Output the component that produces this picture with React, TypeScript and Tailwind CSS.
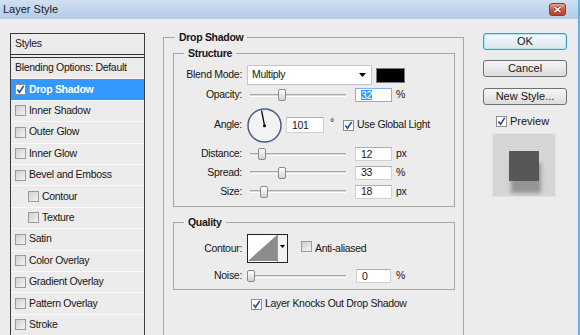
import React from "react";

function Check({ checked }: { checked?: boolean }) {
  return (
    <span
      className={
        checked
          ? "inline-flex w-[11px] h-[11px] shrink-0 items-center justify-center border border-[#8f8f8f] bg-white"
          : "inline-flex w-[11px] h-[11px] shrink-0 items-center justify-center border border-[#9a9a9a] bg-gradient-to-br from-[#cfcfcf] to-[#f4f4f4]"
      }
    >
      {checked && (
        <svg width="9" height="9" viewBox="0 0 9 9">
          <path d="M1.4 4.6 L3.5 7.3 L7.7 0.9" fill="none" stroke="#2b4c9e" strokeWidth="1.6" />
        </svg>
      )}
    </span>
  );
}

function Slider({ thumb }: { thumb: string }) {
  return (
    <div className="relative flex h-[12px] w-[96px] shrink-0 items-center">
      <div className="h-[3px] w-full border-t border-[#a8a8a8] border-b border-b-white bg-[#d9d9d9]" />
      <div className={"absolute top-0 h-[12px] w-[8px] rounded-[2px] border border-[#8a8a8a] bg-gradient-to-b from-white to-[#d4d4d4] " + thumb} />
    </div>
  );
}

function Field({ value, w, h, selected }: { value: string; w: string; h: string; selected?: boolean }) {
  return (
    <div
      className={
        (selected ? "border-[#7eb4ea] " : "border-[#d0d0d0] border-t-[#adadad] ") +
        "flex shrink-0 items-center border bg-white pl-[5px] text-[10.5px] leading-none " +
        w +
        " " +
        h
      }
    >
      {selected ? <span className="bg-[#3399ff] text-white">{value}</span> : value}
    </div>
  );
}

function Label({ children }: { children: React.ReactNode }) {
  return <span className="w-[68px] shrink-0 text-right">{children}</span>;
}

const items: { label: string; checked?: boolean; selected?: boolean; indent?: boolean; noCheck?: boolean }[] = [
  { label: "Blending Options: Default", noCheck: true },
  { label: "Drop Shadow", checked: true, selected: true },
  { label: "Inner Shadow" },
  { label: "Outer Glow" },
  { label: "Inner Glow" },
  { label: "Bevel and Emboss" },
  { label: "Contour", indent: true },
  { label: "Texture", indent: true },
  { label: "Satin" },
  { label: "Color Overlay" },
  { label: "Gradient Overlay" },
  { label: "Pattern Overlay" },
  { label: "Stroke" },
];

export default function App() {
  return (
    <div className="h-[335px] w-[580px] overflow-hidden border-r-2 border-[#5cb3e6] bg-[#ececec] font-['Liberation_Sans',Arial,sans-serif] text-[10.5px] tracking-[-0.3px] text-[#161616]">
      {/* title bar */}
      <div className="flex h-[19px] items-center justify-between bg-gradient-to-b from-[#cfe0f2] to-[#b3cbe6] pl-[3px] pr-[12px]">
        <span className="text-[11px] tracking-normal text-[#1b1b1b]">Layer Style</span>
        <div className="flex h-[13px] w-[17px] items-center justify-center rounded-[3px] border border-[#8a3a2d] bg-gradient-to-b from-[#e9a392] via-[#d2583f] to-[#c0402a]">
          <svg width="9" height="7" viewBox="0 0 9 7">
            <path d="M1.5 0.8 L7.5 6.2 M7.5 0.8 L1.5 6.2" stroke="#5a1f16" strokeWidth="2.6" />
            <path d="M1.5 0.8 L7.5 6.2 M7.5 0.8 L1.5 6.2" stroke="#ffffff" strokeWidth="1.6" />
          </svg>
        </div>
      </div>

      {/* body */}
      <div className="flex items-start pl-[10px]">
        {/* style list */}
        <div className="mt-[14px] h-[320px] w-[135px] shrink-0 border border-[#3a3a3a] bg-[#ececec]">
          <div className="flex h-[24px] items-center border-b-[4px] border-double border-[#333] pl-[4px]">Styles</div>
          {items.map((it) => (
            <div
              key={it.label}
              className={
                (it.selected ? "bg-[#3399ff] font-bold text-white " : "") +
                (it.indent ? "pl-[17px] " : "pl-[4px] ") +
                "flex h-[21.4px] items-center gap-[3px] border-b border-[#fafafa]"
              }
            >
              {!it.noCheck && <Check checked={it.checked} />}
              <span>{it.label}</span>
            </div>
          ))}
        </div>

        {/* drop shadow settings */}
        <fieldset className="ml-[18px] mt-[12px] h-[330px] w-[301px] shrink-0 border border-[#a6a6a6] pl-[9px] pr-[8px]">
          <legend className="ml-[2px] px-[4px] text-[10.5px] font-bold leading-[12px]">Drop Shadow</legend>

          <fieldset className="mt-[4px] border border-[#a6a6a6] pb-[5px] pt-[6px]">
            <legend className="ml-[10px] px-[4px] font-bold leading-[12px]">Structure</legend>

            <div className="flex h-[20px] items-center">
              <Label>Blend Mode:</Label>
              <div className="ml-[5px] flex h-[20px] w-[125px] items-center justify-between border border-[#c5c5c5] bg-white pl-[4px] pr-[5px]">
                <span>Multiply</span>
                <svg width="7" height="4" viewBox="0 0 7 4">
                  <path d="M0 0 H7 L3.5 4 Z" fill="#000" />
                </svg>
              </div>
              <div className="ml-[4px] h-[15px] w-[29px] border border-[#7a7a7a] bg-black" />
            </div>

            <div className="flex h-[20px] items-center">
              <Label>Opacity:</Label>
              <div className="ml-[8px]">
                <Slider thumb="left-[28px]" />
              </div>
              <div className="ml-[9px]">
                <Field value="32" w="w-[37px]" h="h-[14px]" selected />
              </div>
              <span className="ml-[4px]">%</span>
            </div>

            <div className="flex h-[40px] items-center">
              <Label>Angle:</Label>
              <svg className="ml-[5px] shrink-0" width="35" height="35" viewBox="0 0 35 35">
                <circle cx="17.5" cy="17.5" r="16.5" fill="#f3f3f3" stroke="#4a5b86" strokeWidth="1.5" />
                <line x1="17.5" y1="17.5" x2="14.6" y2="2.6" stroke="#000" strokeWidth="1.3" />
                <circle cx="17.5" cy="17.8" r="1.5" fill="#000" />
              </svg>
              <div className="ml-[4px]">
                <Field value="101" w="w-[38px]" h="h-[16px]" />
              </div>
              <span className="w-[19px] self-start pl-[6px] pt-[10px]">°</span>
              <Check checked />
              <span className="ml-[3px]">Use Global Light</span>
            </div>

            <div className="flex h-[18px] items-center">
              <Label>Distance:</Label>
              <div className="ml-[8px]">
                <Slider thumb="left-[8px]" />
              </div>
              <div className="ml-[9px]">
                <Field value="12" w="w-[37px]" h="h-[14px]" />
              </div>
              <span className="ml-[4px]">px</span>
            </div>

            <div className="flex h-[19px] items-center">
              <Label>Spread:</Label>
              <div className="ml-[8px]">
                <Slider thumb="left-[28px]" />
              </div>
              <div className="ml-[9px]">
                <Field value="33" w="w-[37px]" h="h-[14px]" />
              </div>
              <span className="ml-[4px]">%</span>
            </div>

            <div className="flex h-[19px] items-center">
              <Label>Size:</Label>
              <div className="ml-[8px]">
                <Slider thumb="left-[10px]" />
              </div>
              <div className="ml-[9px]">
                <Field value="18" w="w-[37px]" h="h-[14px]" />
              </div>
              <span className="ml-[4px]">px</span>
            </div>
          </fieldset>

          <fieldset className="mt-[9px] border border-[#a6a6a6] pb-[3px] pt-[6px]">
            <legend className="ml-[10px] px-[4px] font-bold leading-[12px]">Quality</legend>

            <div className="flex h-[29px] items-center">
              <Label>Contour:</Label>
              <div className="ml-[5px] flex h-[29px] w-[41px] shrink-0 border-[1.5px] border-[#222] bg-white">
                <svg width="29" height="26" viewBox="0 0 29 26" className="shrink-0">
                  <rect width="29" height="26" fill="#fff" />
                  <polygon points="0,26 29,0 29,26" fill="#8c8c8c" />
                </svg>
                <div className="flex flex-1 items-center justify-center border-l border-[#9a9a9a] bg-[#f2f2f2] pb-[4px]">
                  <svg width="5" height="3" viewBox="0 0 5 3">
                    <path d="M0 0 H5 L2.5 3 Z" fill="#000" />
                  </svg>
                </div>
              </div>
              <span className="ml-[13px]">
                <Check />
              </span>
              <span className="ml-[3px]">Anti-aliased</span>
            </div>

            <div className="mt-[3px] flex h-[20px] items-center">
              <Label>Noise:</Label>
              <div className="ml-[8px]">
                <Slider thumb="left-[-3px]" />
              </div>
              <div className="ml-[10px]">
                <Field value="0" w="w-[35px]" h="h-[14px]" />
              </div>
              <span className="ml-[5px]">%</span>
            </div>
          </fieldset>

          <div className="ml-[78px] mt-[8px] flex h-[12px] items-center gap-[3px]">
            <Check checked />
            <span>Layer Knocks Out Drop Shadow</span>
          </div>
        </fieldset>

        {/* buttons */}
        <div className="ml-[19px] mt-[14px] flex w-[84px] shrink-0 flex-col text-[11px] tracking-normal">
          <button className="flex h-[17px] w-[84px] items-center justify-center rounded-[3px] border border-[#3c9bd0] bg-gradient-to-b from-[#f5f9fc] to-[#dbe6ee] shadow-[inset_0_0_0_1px_#aee6fa]">
            OK
          </button>
          <button className="mt-[10px] flex h-[17px] w-[84px] items-center justify-center rounded-[3px] border border-[#707070] bg-gradient-to-b from-[#f6f6f6] to-[#dcdcdc]">
            Cancel
          </button>
          <button className="mt-[11px] flex h-[17px] w-[84px] items-center justify-center rounded-[3px] border border-[#707070] bg-gradient-to-b from-[#f6f6f6] to-[#dcdcdc]">
            New Style...
          </button>
          <div className="ml-[13px] mt-[11px] flex h-[11px] items-center gap-[3px]">
            <Check checked />
            <span>Preview</span>
          </div>
          <div className="ml-[9px] mt-[6px] h-[64px] w-[64px] border border-[#e2e2e2] bg-[#d5d5d5] pl-[16px] pt-[17px]">
            <div className="h-[30px] w-[30px] bg-[#575757] shadow-[2px_12px_4px_rgba(0,0,0,0.3)]" />
          </div>
        </div>
      </div>
    </div>
  );
}
